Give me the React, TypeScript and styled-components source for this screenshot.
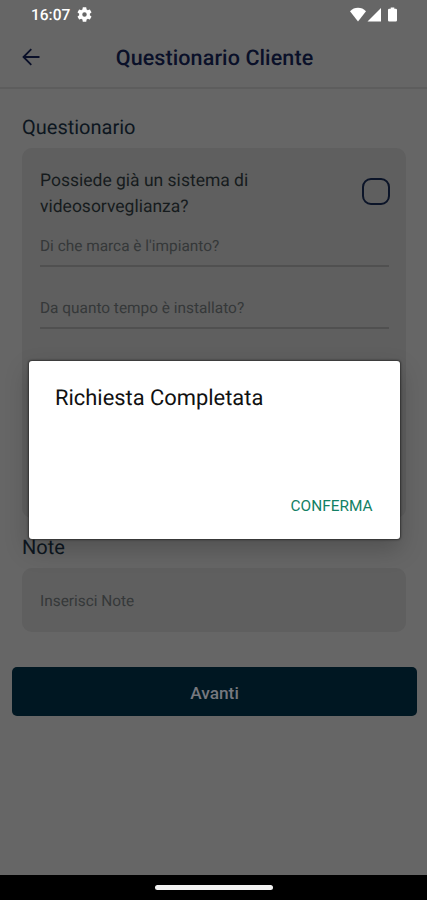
import React from 'react';
import styled, { createGlobalStyle } from 'styled-components';

const GlobalStyle = createGlobalStyle`
  * { box-sizing: border-box; }
  body { margin: 0; background: #666; font-family: Roboto, "Noto Sans", sans-serif; }
  button, input, h1, h2, p { font: inherit; margin: 0; padding: 0; border: 0; }
`;

const Screen = styled.div`
  position: relative;
  display: flex;
  flex-direction: column;
  width: 427px;
  height: 900px;
  overflow: hidden;
  background: #666;
  text-rendering: geometricPrecision;
`;

const StatusBar = styled.div`
  display: flex;
  justify-content: space-between;
  height: 29px;
  padding: 0 29px 0 31px;
  color: #fff;
`;

const StatusGroup = styled.div`
  display: flex;
  align-items: center;
`;

const Clock = styled.span`
  width: 45.5px;
  font-size: 15.5px;
  font-weight: 500;
  line-height: 30px;
  white-space: nowrap;
`;

const Header = styled.header`
  display: grid;
  grid-template-columns: 62px 1fr 60px;
  align-items: center;
  height: 60px;
  border-bottom: 2px solid #5d5d5d;
`;

const BackButton = styled.button`
  display: flex;
  padding: 0 0 2px 22px;
  background: none;
`;

const Title = styled.h1`
  padding-top: 2px;
  font-size: 21.5px;
  font-weight: 500;
  line-height: 26px;
  letter-spacing: 0.1px;
  text-align: center;
  white-space: nowrap;
  color: #0a1029;
`;

const Content = styled.main`
  display: flex;
  flex-direction: column;
  flex: 1;
  padding: 26px 10px 0 12px;
`;

const SectionTitle = styled.h2`
  height: 24px;
  margin: 0 0 9px 10px;
  font-size: 20px;
  font-weight: 400;
  line-height: 24px;
  color: #0d1620;
`;

const Card = styled.section<{ $height: number; $below: number }>`
  height: ${(p) => p.$height}px;
  margin: 0 11px ${(p) => p.$below}px 10px;
  padding: 0 17px 0 18px;
  border-radius: 10px;
  background: #5f5f5f;
`;

const Question = styled.div`
  display: flex;
  justify-content: space-between;
  padding-top: 18px;
  height: 79px;
`;

const QuestionText = styled.p`
  width: 240px;
  padding-top: 2px;
  font-size: 17.5px;
  line-height: 26px;
  color: #161b1d;
`;

const Checkbox = styled.button`
  width: 28px;
  height: 27px;
  margin: 12px -1px 0 0;
  border: 2px solid #0b1428;
  border-radius: 9px;
  background: transparent;
`;

const Field = styled.div`
  height: 62px;
`;

const FieldInput = styled.div`
  height: 40px;
  border-bottom: 2px solid #505050;
  font-size: 15.4px;
  line-height: 39px;
  color: #353839;
`;

const NotePlaceholder = styled.p`
  font-size: 15.4px;
  line-height: 66px;
  color: #353839;
`;

const NextButton = styled.button`
  height: 49px;
  border-radius: 5px;
  background: #001722;
  color: #76787f;
  font-size: 17.3px;
  font-weight: 500;
  line-height: 51px;
  padding-top: 1px;
`;

const NavigationBar = styled.footer`
  display: flex;
  justify-content: center;
  height: 25px;
  padding-top: 10px;
  background: #000;
`;

const HomeHandle = styled.div`
  width: 118px;
  height: 5px;
  border-radius: 3px;
  background: #f2f2f2;
`;

const Dialog = styled.div`
  position: absolute;
  left: 28.5px;
  top: 361px;
  display: flex;
  flex-direction: column;
  justify-content: space-between;
  width: 371px;
  height: 178px;
  padding: 24px 27px 22px 26.5px;
  border-radius: 3px;
  background: #fff;
  box-shadow: 0 0 2px 1px rgba(0, 0, 0, 0.45), 0 10px 24px rgba(0, 0, 0, 0.22);
`;

const DialogTitle = styled.h2`
  font-size: 21.9px;
  font-weight: 400;
  line-height: 28px;
  color: #111;
`;

const ConfirmButton = styled.button`
  align-self: flex-end;
  background: none;
  color: #128064;
  font-size: 15.4px;
  line-height: 22px;
`;

export default function App() {
  return (
    <>
      <GlobalStyle />
      <Screen>
        <StatusBar>
          <StatusGroup>
            <Clock>16:07</Clock>
            <svg width="15" height="15" viewBox="2 2 20 20" fill="currentColor">
              <path d="M19.14 12.94a7.5 7.5 0 0 0 0-1.88l2.03-1.58a.5.5 0 0 0 .12-.61l-1.92-3.32a.5.5 0 0 0-.59-.22l-2.39.96a7 7 0 0 0-1.62-.94l-.36-2.54a.5.5 0 0 0-.48-.41h-3.84a.5.5 0 0 0-.47.41l-.36 2.54a7 7 0 0 0-1.62.94l-2.39-.96a.5.5 0 0 0-.59.22L2.74 8.87a.5.5 0 0 0 .12.61l2.03 1.58a7.5 7.5 0 0 0 0 1.88l-2.03 1.58a.5.5 0 0 0-.12.61l1.92 3.32c.12.22.37.29.59.22l2.39-.96c.5.38 1.03.7 1.62.94l.36 2.54c.05.24.24.41.48.41h3.84c.24 0 .44-.17.47-.41l.36-2.54a7 7 0 0 0 1.62-.94l2.39.96c.22.08.47 0 .59-.22l1.92-3.32a.5.5 0 0 0-.12-.61zM12 15a3 3 0 1 1 0-6 3 3 0 0 1 0 6z" />
            </svg>
          </StatusGroup>
          <StatusGroup>
            <svg width="49" height="16" viewBox="0 0 49 16" fill="currentColor">
              <path d="M1 4.2Q4.4.8 9 .8t8 3.4L9 14.5z" />
              <path d="M32 1v13.5H18.5z" />
              <path d="M41.7.4h3.6v1.4h1.5q1.2 0 1.2 1.2v10.2q0 1.3-1.2 1.3h-6.6q-1.2 0-1.2-1.3V3q0-1.2 1.2-1.2h1.5z" />
            </svg>
          </StatusGroup>
        </StatusBar>
        <Header>
          <BackButton aria-label="Indietro">
            <svg width="18" height="18" viewBox="0 0 18 18" fill="none" stroke="#0a1029" strokeWidth="1.8">
              <path d="M17.5 9H2M9.3 1.2 1.5 9l7.8 7.8" />
            </svg>
          </BackButton>
          <Title>Questionario Cliente</Title>
        </Header>
        <Content>
          <SectionTitle>Questionario</SectionTitle>
          <Card $height={370} $below={17}>
            <Question>
              <QuestionText>Possiede già un sistema di videosorveglianza?</QuestionText>
              <Checkbox aria-label="Possiede già un sistema" />
            </Question>
            <Field>
              <FieldInput>Di che marca è l'impianto?</FieldInput>
            </Field>
            <Field>
              <FieldInput>Da quanto tempo è installato?</FieldInput>
            </Field>
          </Card>
          <SectionTitle>Note</SectionTitle>
          <Card $height={64} $below={35}>
            <NotePlaceholder>Inserisci Note</NotePlaceholder>
          </Card>
          <NextButton>Avanti</NextButton>
        </Content>
        <NavigationBar>
          <HomeHandle />
        </NavigationBar>
        <Dialog role="dialog">
          <DialogTitle>Richiesta Completata</DialogTitle>
          <ConfirmButton>CONFERMA</ConfirmButton>
        </Dialog>
      </Screen>
    </>
  );
}
